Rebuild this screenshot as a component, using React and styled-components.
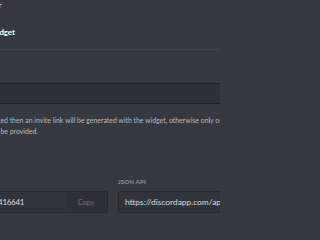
import React from "react";
import styled, { createGlobalStyle } from "styled-components";

const Global = createGlobalStyle`
  html, body { margin: 0; padding: 0; background: #36393f; }
  body { overflow: hidden; font-family: "Lato", "Liberation Sans", sans-serif; }
`;

const Page = styled.div`
  width: 220px;
  height: 220px;
  overflow: hidden;
  background: #36393f;
`;

const Content = styled.div`
  margin-left: -60px;
  width: 346px;
  display: flex;
  flex-direction: column;
`;

const TopText = styled.div`
  font-size: 8px;
  line-height: 10px;
  color: #dcddde;
  white-space: nowrap;
`;

const SwitchRow = styled.div`
  margin-top: 17px;
  height: 10px;
  display: flex;
  align-items: center;
  justify-content: space-between;
`;

const SwitchLabel = styled.div`
  font-size: 7.8px;
  line-height: 10px;
  font-weight: 700;
  color: #ffffff;
  white-space: nowrap;
`;

const Switch = styled.div`
  width: 20px;
  height: 12px;
  border-radius: 6px;
  background: #72767d;
`;

const Divider = styled.div`
  margin-top: 12px;
  height: 1px;
  background: rgba(255, 255, 255, 0.06);
`;

const Label = styled.div`
  margin-top: ${(p) => p.$mt || 0}px;
  font-size: 6px;
  line-height: 8px;
  font-weight: 700;
  letter-spacing: 0.2px;
  text-transform: uppercase;
  color: #8e9297;
  white-space: nowrap;
`;

const Select = styled.div`
  margin-top: 5px;
  height: 19px;
  border: 1px solid #202225;
  background: #2f3136;
  border-radius: 2px;
`;

const Description = styled.p`
  margin: 11px 0 0;
  font-size: 6.9px;
  line-height: 11px;
  color: #b9bbbe;
`;

const Columns = styled.div`
  margin-top: 41px;
  display: grid;
  grid-template-columns: minmax(0, 1fr) minmax(0, 1fr);
  column-gap: 10px;
`;

const Field = styled.div`
  min-width: 0;
  display: flex;
  flex-direction: column;
`;

const InputBox = styled.div`
  margin-top: 5px;
  height: 20px;
  border: 1px solid #26282c;
  background: #303339;
  border-radius: 2px;
  display: flex;
  align-items: center;
  overflow: hidden;
`;

const InputText = styled.div`
  flex: 1;
  min-width: 0;
  padding-left: ${(p) => p.$pad || 5}px;
  font-size: ${(p) => p.$size || 8}px;
  letter-spacing: ${(p) => p.$ls || 0}px;
  color: #dcddde;
  white-space: nowrap;
  overflow: hidden;
`;

const CopyButton = styled.button`
  flex: none;
  width: 40px;
  height: 18px;
  margin-right: 1px;
  border: none;
  border-radius: 2px;
  background: #2e3035;
  color: #72767d;
  font-family: inherit;
  font-size: 7px;
  padding: 0;
`;

export default function App() {
  return (
    <Page>
      <Global />
      <Content>
        <TopText>Widget for server</TopText>
        <SwitchRow>
          <SwitchLabel>Enable Server Widget</SwitchLabel>
          <Switch />
        </SwitchRow>
        <Divider />
        <Label $mt={20}>Invite Channel</Label>
        <Select />
        <Description>
          If a channel is selected then an invite link will be generated with the widget, otherwise only online members
          <br />
          and their status will be provided.
        </Description>
        <Columns>
          <Field>
            <Label>Server ID</Label>
            <InputBox>
              <InputText $ls={-0.3}>290926798626416641</InputText>
              <CopyButton>Copy</CopyButton>
            </InputBox>
          </Field>
          <Field>
            <Label>JSON API</Label>
            <InputBox>
              <InputText $pad={6} $size={8.4}>
                https://discordapp.com/api/guilds/290926798626416641/widget.json
              </InputText>
            </InputBox>
          </Field>
        </Columns>
      </Content>
    </Page>
  );
}
